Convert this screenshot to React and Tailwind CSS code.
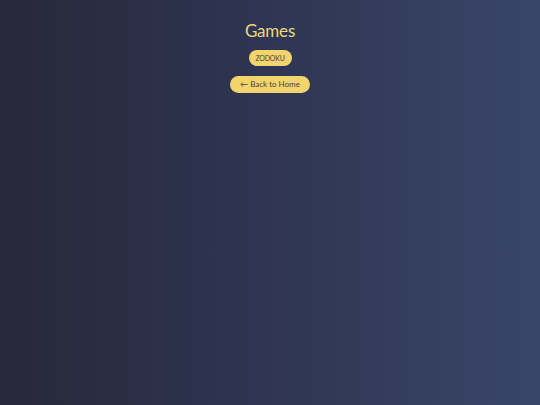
export default function App() {
  return (
    <div
      className="min-h-[405px] w-full bg-gradient-to-r from-[#272839] via-[#2f3553] to-[#394669] flex flex-col items-center pt-[20px]"
      style={{ fontFamily: 'Lato, "Open Sans", sans-serif' }}
    >
      <h1 className="text-[17px] leading-[22px] text-[#eed87f] tracking-[-0.2px]">Games</h1>
      <div className="mt-[8px] flex flex-col items-center gap-[10px]">
        <button className="h-[16px] w-[43px] rounded-full bg-[#f2d46c] text-[#4a4536] text-[7px] leading-[16px] tracking-[-0.2px]">
          ZODOKU
        </button>
        <button className="h-[17px] w-[80px] rounded-full bg-[#f2d46c] text-[#4a4536] text-[8px] leading-[17px]">
          ← Back to Home
        </button>
      </div>
    </div>
  );
}
